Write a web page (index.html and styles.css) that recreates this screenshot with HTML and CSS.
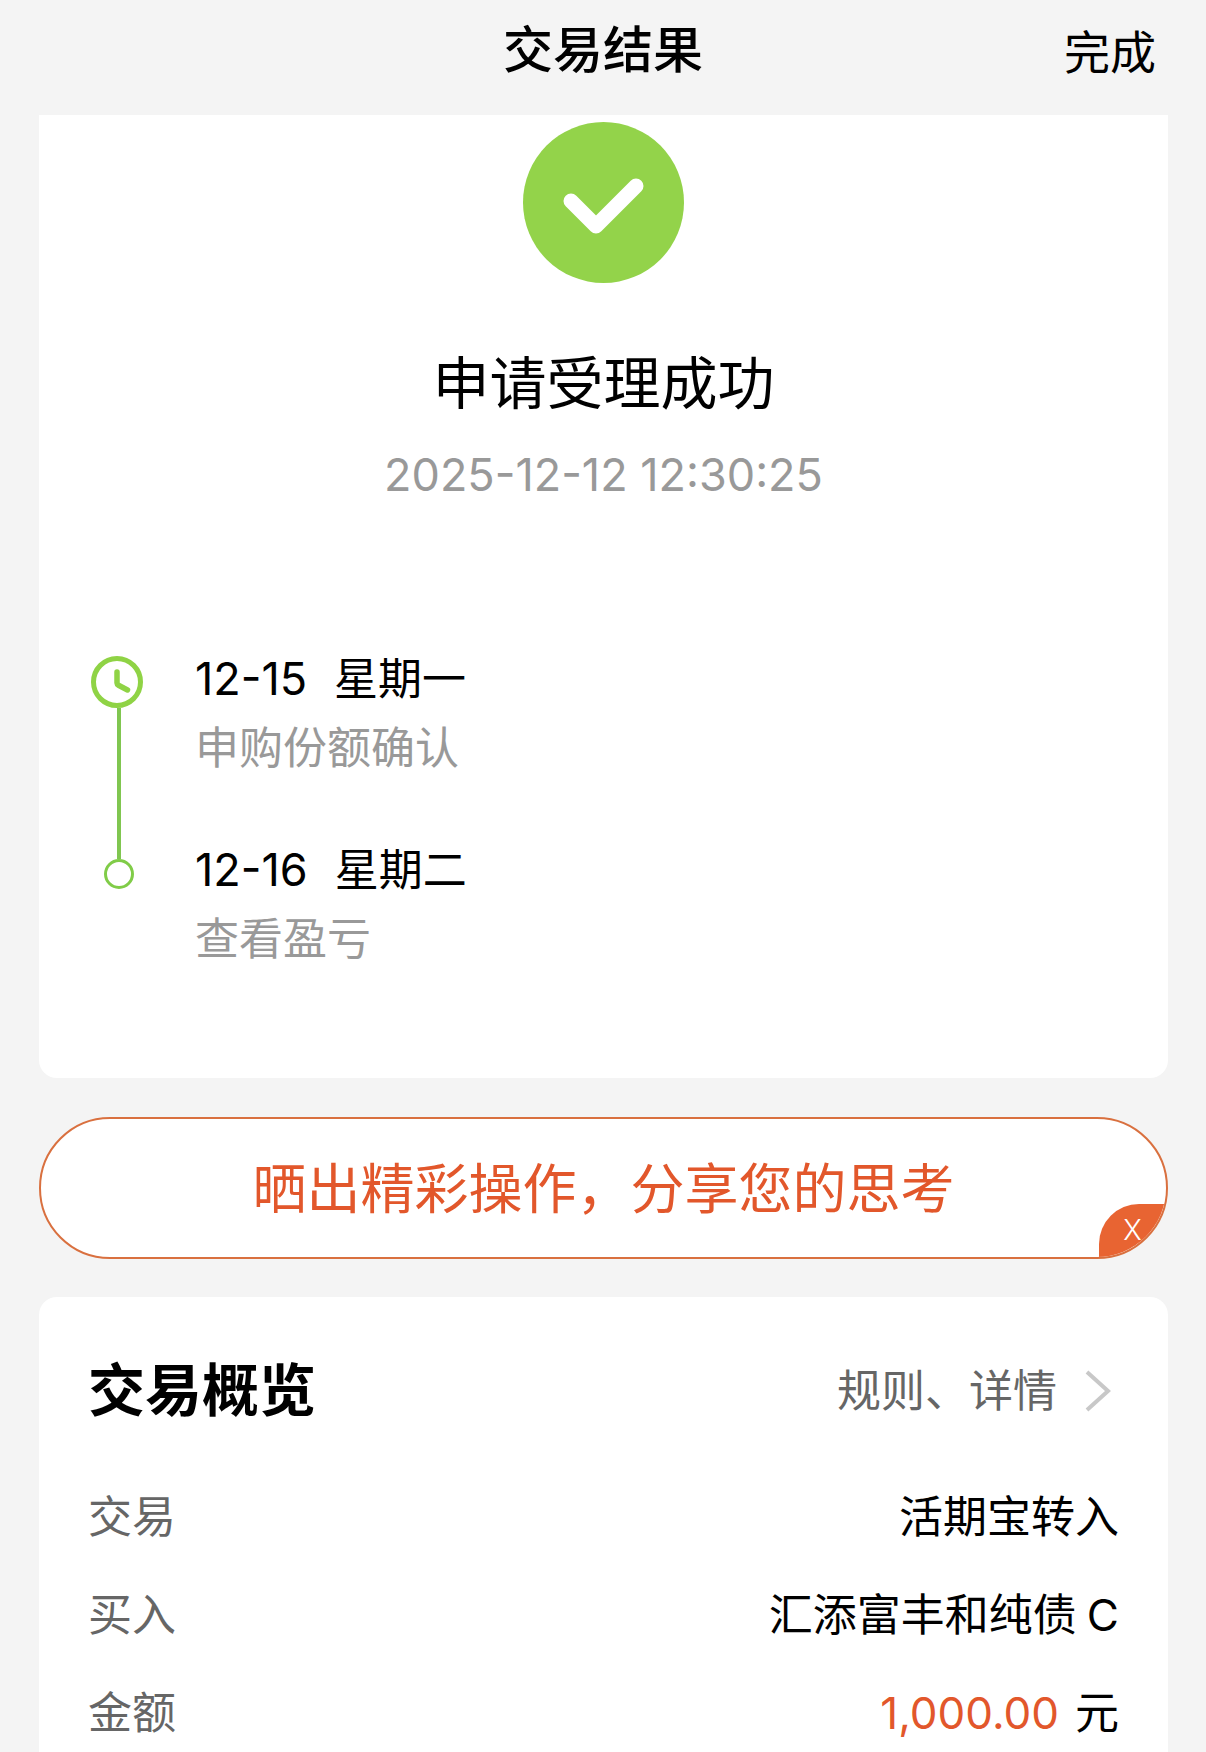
FILE: index.html
```html
<!DOCTYPE html>
<html lang="zh-CN">
<head>
<meta charset="utf-8">
<meta name="viewport" content="width=device-width, initial-scale=1">
<title>交易结果</title>
<link rel="stylesheet" href="styles.css">
</head>
<body>
<header class="topbar">
  <h1 class="topbar-title">交易结果</h1>
  <button class="topbar-done" type="button">完成</button>
</header>
<main class="content">
  <section class="card result">
    <svg class="result-icon" viewBox="0 0 161 161" aria-hidden="true">
      <circle cx="80.500" cy="80.500" r="80.500" fill="#93d34a"/>
      <path d="M48 79 L73 104 L113 64" fill="none" stroke="#fff" stroke-width="15" stroke-linecap="round" stroke-linejoin="round"/>
    </svg>
    <h2 class="result-title">申请受理成功</h2>
    <time class="result-time">2025-12-12 12:30:25</time>
    <ol class="timeline">
      <li class="step">
        <div class="marker marker-first">
          <svg class="clock" viewBox="0 0 52 52" aria-hidden="true">
            <circle cx="26" cy="26" r="23.500" fill="none" stroke="#8fd345" stroke-width="5"/>
            <path d="M26 16 V27 Q26 28.500 27.500 29.300 L36.500 34" fill="none" stroke="#8fd345" stroke-width="5.500" stroke-linecap="round" stroke-linejoin="round"/>
          </svg>
          <span class="line"></span>
        </div>
        <div class="step-text">
          <p class="step-date"><span class="number">12-15</span><span>星期一</span></p>
          <p class="step-note">申购份额确认</p>
        </div>
      </li>
      <li class="step">
        <div class="marker">
          <span class="line line-short"></span>
          <span class="dot"></span>
        </div>
        <div class="step-text">
          <p class="step-date"><span class="number">12-16</span><span>星期二</span></p>
          <p class="step-note">查看盈亏</p>
        </div>
      </li>
    </ol>
  </section>

  <div class="share">
    <button class="share-button" type="button">晒出精彩操作，分享您的思考</button>
    <button class="share-close" type="button" aria-label="关闭">X</button>
  </div>

  <section class="card overview">
    <div class="overview-head">
      <h2 class="overview-title">交易概览</h2>
      <a class="overview-link" href="#">规则、详情
        <svg class="chevron" viewBox="0 0 26 42" aria-hidden="true">
          <path d="M2 2 L23 21 L2 40" fill="none" stroke="#c8c8c8" stroke-width="4"/>
        </svg>
      </a>
    </div>
    <dl class="facts">
      <div class="fact"><dt>交易</dt><dd>活期宝转入</dd></div>
      <div class="fact"><dt>买入</dt><dd>汇添富丰和纯债<span class="share-class">C</span></dd></div>
      <div class="fact"><dt>金额</dt><dd><span class="amount">1,000.00</span>元</dd></div>
    </dl>
  </section>
</main>
</body>
</html>
```
FILE: styles.css
```css
* {
  box-sizing: border-box;
}

body {
  margin: 0;
  min-height: 100vh;
  display: flex;
  flex-direction: column;
  background: #f4f4f4;
  color: #000;
  font-family: Inter, "Noto Sans CJK SC", sans-serif;
  font-size: 44px;
  line-height: 68px;
}

h1, h2, p, ol, dl, dd {
  margin: 0;
  padding: 0;
}

button {
  border: 0;
  padding: 0;
  background: none;
  color: inherit;
  font: inherit;
  cursor: pointer;
}

.topbar {
  display: grid;
  grid-template-columns: 1fr auto 1fr;
  align-items: center;
  height: 115px;
  padding: 0 50px 16px;
}

.topbar-title {
  grid-column: 2;
  font-size: 50px;
  font-weight: 500;
}

.topbar-done {
  justify-self: end;
  padding-top: 4px;
  font-size: 46px;
}

.content {
  flex: 1;
  display: flex;
  flex-direction: column;
  padding: 0 38px 0 39px;
}

.card {
  background: #fff;
}

.result {
  display: flex;
  flex-direction: column;
  align-items: center;
  padding: 7px 52px 105px;
  border-radius: 0 0 18px 18px;
}

.result-icon {
  width: 161px;
  height: 161px;
}

.result-title {
  margin-top: 61px;
  font-size: 57px;
  font-weight: 400;
  line-height: 80px;
}

.result-time {
  margin-top: 17px;
  color: #999;
  font-size: 45px;
}

.timeline {
  align-self: stretch;
  margin-top: 136px;
  list-style: none;
}

.step {
  display: flex;
  gap: 48px;
}

.step:not(:last-child) .step-text {
  padding-bottom: 54px;
}

.marker {
  display: flex;
  flex-direction: column;
  align-items: center;
  width: 56px;
}

.marker-first {
  padding-top: 11px;
}

.clock {
  align-self: flex-start;
  width: 52px;
  height: 52px;
}

.line {
  flex: 1;
  width: 4px;
  background: #80c650;
}

.line-short {
  flex: none;
  height: 23px;
}

.dot {
  width: 30px;
  height: 30px;
  border: 3px solid #80cc48;
  border-radius: 50%;
}

.step-date {
  display: flex;
  gap: 27px;
}

.number {
  font-size: 45px;
}

.step-note {
  margin-top: 1px;
  color: #999;
}

.share {
  position: relative;
  display: flex;
  height: 142px;
  margin: 39px 0 38px;
  overflow: hidden;
  border: 2px solid #d9703f;
  border-radius: 71px;
  background: #fff;
}

.share-button {
  flex: 1;
  padding-top: 4px;
  color: #e2572b;
  font-size: 54px;
}

.share-close {
  position: absolute;
  right: 0;
  bottom: 0;
  width: 67px;
  height: 53px;
  border-top-left-radius: 40px;
  background: #e86432;
  color: #fff;
  font-size: 28px;
  font-weight: 300;
  line-height: 53px;
}

.overview {
  flex: 1;
  padding: 54px 49px 4px;
  border-radius: 18px 18px 0 0;
}

.overview-head {
  display: flex;
  align-items: center;
  justify-content: space-between;
}

.overview-title {
  font-size: 57px;
  font-weight: 700;
  line-height: 80px;
}

.overview-link {
  display: flex;
  align-items: center;
  gap: 28px;
  padding-right: 8px;
  color: #666;
  text-decoration: none;
}

.chevron {
  width: 26px;
  height: 42px;
}

.facts {
  display: flex;
  flex-direction: column;
  gap: 30px;
  margin-top: 52px;
}

.fact {
  display: flex;
  justify-content: space-between;
}

.fact dt {
  color: #666;
}

.share-class {
  margin-left: 10px;
}

.amount {
  margin-right: 16px;
  color: #e2572b;
}
```
